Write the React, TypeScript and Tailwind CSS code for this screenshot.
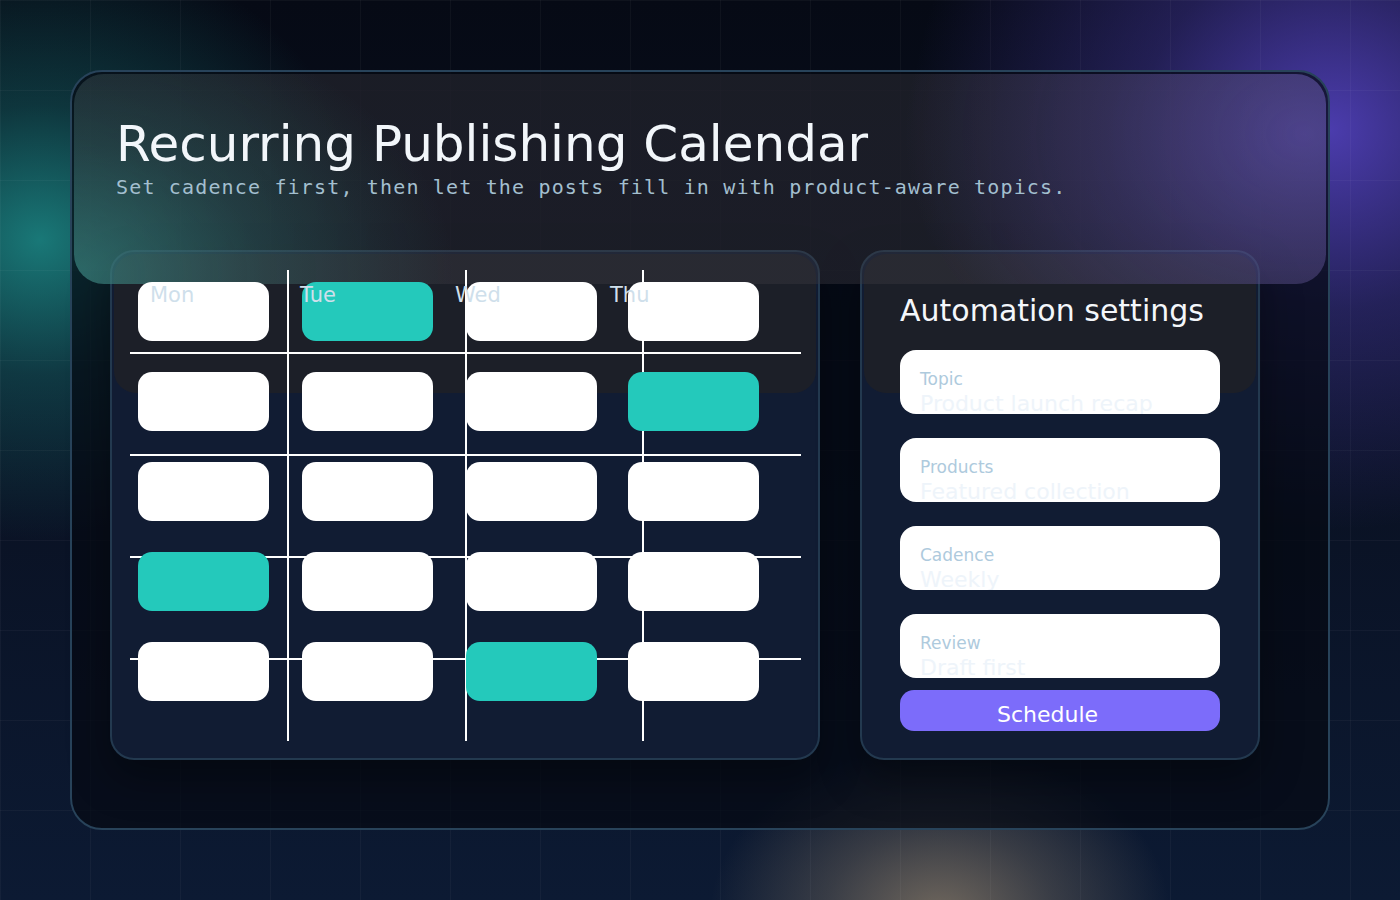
import React from "react";

const teal = [
  [false, true, false, false],
  [false, false, false, true],
  [false, false, false, false],
  [true, false, false, false],
  [false, false, true, false],
];

const fields = [
  { label: "Topic", value: "Product launch recap" },
  { label: "Products", value: "Featured collection" },
  { label: "Cadence", value: "Weekly" },
  { label: "Review", value: "Draft first" },
];

const days = [
  { name: "Mon", w: "w-[150px]" },
  { name: "Tue", w: "w-[155px]" },
  { name: "Wed", w: "w-[155px]" },
  { name: "Thu", w: "w-[155px]" },
];

/* grid of guide lines: 4 columns x 5 rows, borders on the inner edges */
const lineCols = ["border-r-2", "border-r-2", "border-r-2", ""];
const lineRows = ["border-b-2", "border-b-2", "border-b-2", "border-b-2", ""];

export default function App() {
  return (
    <div className="relative w-[1400px] h-[900px] overflow-hidden pt-[70px] pl-[70px] font-['DejaVu_Sans',sans-serif] bg-[radial-gradient(ellipse_330px_300px_at_40px_240px,rgba(30,150,145,0.78),rgba(30,150,145,0.3)_45%,transparent_100%),radial-gradient(ellipse_420px_400px_at_1330px_130px,rgba(92,72,210,0.8),rgba(92,72,210,0.33)_45%,transparent_100%),radial-gradient(ellipse_230px_170px_at_940px_915px,rgba(140,125,105,0.78),rgba(140,125,105,0.35)_50%,transparent_100%),linear-gradient(180deg,#060a15_0%,#0a1224_55%,#0c1a33_100%)]">
      <div className="absolute inset-0 pointer-events-none bg-[linear-gradient(to_right,rgba(255,255,255,0.035)_1px,transparent_1px),linear-gradient(to_bottom,rgba(255,255,255,0.035)_1px,transparent_1px)] bg-size-[90px_90px]" />

      <div className="relative w-[1260px] h-[760px] rounded-[32px] border-2 border-[#28435a] bg-[rgba(6,10,20,0.72)]">
        <div className="absolute left-[2px] top-[2px] right-[2px] h-[210px] rounded-[30px] z-[2] pointer-events-none bg-[radial-gradient(ellipse_380px_260px_at_0px_200px,rgba(60,165,155,0.5),rgba(60,165,155,0.2)_50%,transparent_100%),radial-gradient(ellipse_400px_300px_at_1230px_60px,rgba(120,100,225,0.48),rgba(120,100,225,0.22)_50%,transparent_100%),linear-gradient(rgba(58,56,64,0.42),rgba(58,56,64,0.42))]" />

        <div className="relative z-[3] pl-[44px] pt-[43px]">
          <h1 className="text-[50px] leading-[58px] text-[#f2f6fa] whitespace-nowrap">
            Recurring Publishing Calendar
          </h1>
          <p className="mt-[3px] font-['DejaVu_Sans_Mono',monospace] text-[20px] leading-[23px] tracking-[0.058em] text-[#a3bfcf] whitespace-nowrap">
            Set cadence first, then let the posts fill in with product-aware topics.
          </p>
        </div>

        <div className="flex gap-[40px] ml-[38px] mt-[51px]">
          {/* Calendar panel */}
          <div className="relative w-[710px] h-[510px] rounded-[24px] border-2 border-[#23394f] bg-[#111c33] shadow-[0_18px_40px_rgba(0,0,0,0.35)]">
            <div className="absolute left-[2px] top-[2px] right-[2px] h-[139px] rounded-[22px] z-[1] bg-[rgba(36,34,34,0.6)]" />

            {/* guide lines behind the slots */}
            <div className="absolute left-[18px] top-[18px] w-[671px] h-[471px] z-[3] grid grid-cols-[159px_178px_177px_1fr] grid-rows-[84px_102px_102px_102px_1fr]">
              {lineRows.flatMap((rb, r) =>
                lineCols.map((cb, c) => (
                  <div key={`l-${r}-${c}`} className={`border-white ${rb} ${cb}`} />
                ))
              )}
            </div>

            <div className="relative z-[4] grid grid-cols-[164px_164px_162px_131px] gap-y-[31px] pl-[26px] pt-[30px]">
              {teal.flatMap((row, r) =>
                row.map((t, c) => (
                  <div
                    key={`${r}-${c}`}
                    className={t ? "w-[131px] h-[59px] rounded-[14px] bg-[#24c9bb]" : "w-[131px] h-[59px] rounded-[14px] bg-white"}
                  />
                ))
              )}
            </div>

            {/* day labels overlaid on the first row */}
            <div className="absolute z-[5] top-[31px] left-[38px] flex text-[21px] leading-[25px] text-[#cfdfeb]">
              {days.map((d) => (
                <div key={d.name} className={d.w}>
                  {d.name}
                </div>
              ))}
            </div>
          </div>

          {/* Settings panel */}
          <div className="relative w-[400px] h-[510px] rounded-[24px] border-2 border-[#23394f] bg-[#111c33] shadow-[0_18px_40px_rgba(0,0,0,0.35)]">
            <div className="absolute left-[2px] top-[2px] right-[2px] h-[139px] rounded-[22px] z-[1] bg-[rgba(36,34,34,0.6)]" />

            <div className="relative z-[4] pl-[38px] pt-[41px]">
              <h2 className="text-[30px] leading-[35px] text-[#f4f7fb] whitespace-nowrap">Automation settings</h2>
              <div className="mt-[22px] flex flex-col gap-[24px] w-[320px]">
                {fields.map((f) => (
                  <div key={f.label} className="h-[64px] rounded-[16px] bg-white pl-[20px] pt-[19px] overflow-hidden">
                    <div className="text-[17px] leading-[20px] text-[#aecadd]">{f.label}</div>
                    <div className="mt-[2px] text-[22px] leading-[26px] text-[#eef4fa] whitespace-nowrap">{f.value}</div>
                  </div>
                ))}
              </div>
              <button className="mt-[12px] h-[41px] w-[320px] rounded-[14px] bg-[#7c6cfa] flex justify-center items-start pt-[12px] pr-[25px] text-[22px] leading-[26px] text-white">
                Schedule
              </button>
            </div>
          </div>
        </div>
      </div>
    </div>
  );
}
